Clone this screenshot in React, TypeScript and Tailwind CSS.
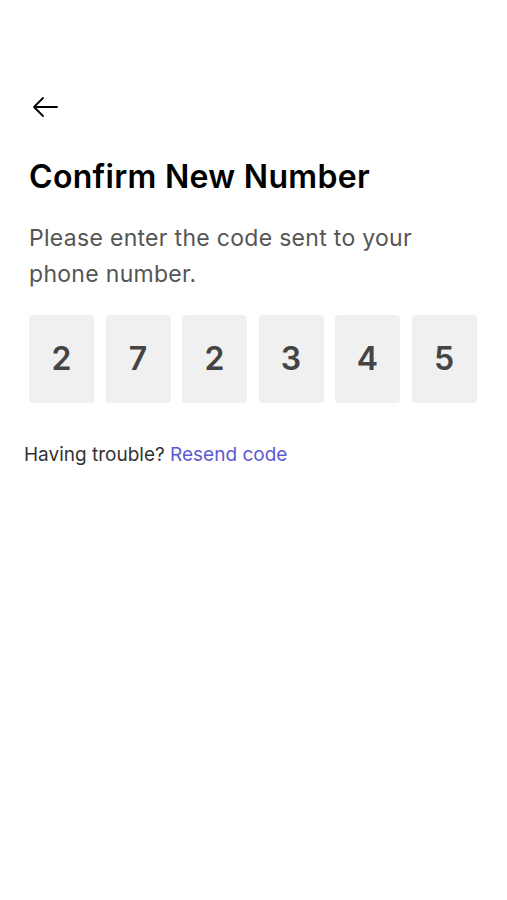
import { useState } from "react";

const font = { fontFamily: "Inter, 'Noto Sans', sans-serif" };

export default function App() {
  const [code] = useState(["2", "7", "2", "3", "4", "5"]);
  return (
    <div className="min-h-[900px] w-full bg-white" style={font}>
      <main className="px-[29px] pt-[93px]">
        <button className="flex h-[28px] w-[32px] items-center pl-[2px] text-black">
          <svg width="28" height="24" viewBox="0 0 28 24" fill="none" stroke="currentColor" strokeWidth="1.8" strokeLinecap="round" strokeLinejoin="round">
            <path d="M26 12H3M12 3L3 12l9 9" />
          </svg>
        </button>
        <h1 className="mt-[36px] text-[32px] leading-[40px] font-semibold tracking-[0.3px] text-black">
          Confirm New Number
        </h1>
        <p className="mt-[23px] text-[23px] leading-[36px] tracking-[0.3px] text-[#555555]">
          Please enter the code sent to your phone number.
        </p>
        <div className="mt-[23px] flex gap-[11.5px]">
          {code.map((d, i) => (
            <div
              key={i}
              className="flex h-[88px] w-[65px] items-center justify-center rounded-[4px] bg-[#f0f0f0] text-[32px] font-semibold text-[#444444]"
            >
              {d}
            </div>
          ))}
        </div>
      </main>
      <p className="mt-[38px] pl-[24px] text-[19px] text-[#333333]">
        Having trouble? <span className="text-[#5b5bd0]">Resend code</span>
      </p>
    </div>
  );
}
